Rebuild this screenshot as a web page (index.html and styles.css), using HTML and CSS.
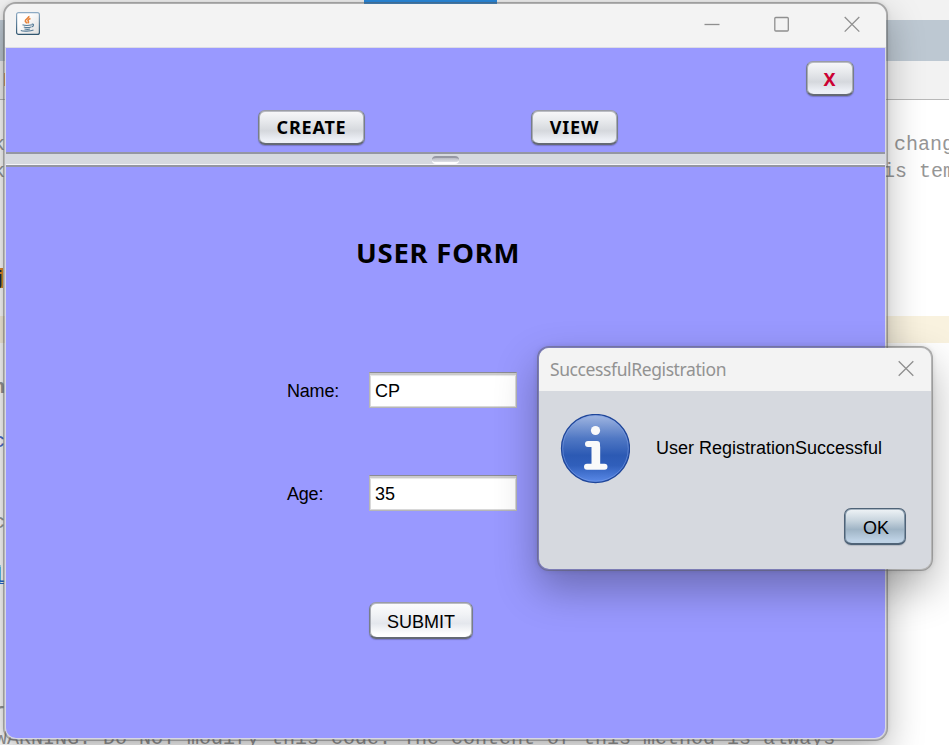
FILE: index.html
```html
<!DOCTYPE html>
<html lang="en">
<head>
<meta charset="utf-8">
<title>User Form</title>
<link rel="stylesheet" href="styles.css">
</head>
<body>
<div class="desktop">
  <div class="editor">
    <div class="tabs"><span class="tab-active"></span></div>
    <div class="band"></div>
    <div class="toolbar"><span class="tool-mark"></span></div>
    <div class="code">
      <div class="line"></div>
      <div class="line"><span class="cut far">k</span><span>change</span></div>
      <div class="line"><span class="cut near">k</span><span>is temp</span></div>
      <div class="line"></div>
      <div class="line"></div>
      <div class="line"></div>
      <div class="line dark"><span class="cut mark">j</span></div>
      <div class="line"></div>
      <div class="line current"></div>
      <div class="line"></div>
      <div class="line bold"><span class="cut">n</span></div>
      <div class="line"></div>
      <div class="line"><span class="cut blue">c</span></div>
      <div class="line"></div>
      <div class="line"></div>
      <div class="line"><span class="cut">c</span></div>
      <div class="line"></div>
      <div class="line"><span class="cut link">l</span></div>
      <div class="line"></div>
      <div class="line"></div>
      <div class="line"></div>
      <div class="line"></div>
      <div class="line bold"><span class="cut">r</span></div>
      <div class="line"><span class="warning">WARNING: Do NOT modify this code. The content of this method is always</span></div>
    </div>
  </div>

  <section class="window main">
    <header class="titlebar">
      <svg class="java" viewBox="0 0 24 24">
        <defs><linearGradient id="jb" x1="0" y1="0" x2="0" y2="1"><stop offset="0" stop-color="#8eabc4"/><stop offset="1" stop-color="#305670"/></linearGradient>
        <linearGradient id="jf" x1="0" y1="0" x2="1" y2="1"><stop offset=".3" stop-color="#fff"/><stop offset="1" stop-color="#ddd"/></linearGradient></defs>
        <rect x=".6" y=".6" width="22.8" height="21.8" rx="2" fill="url(#jf)" stroke="url(#jb)" stroke-width="1.2"/>
        <path d="M12.800 4c1 2-4 3-3.500 5 .2 1 1.500 1.500 1.500 2.500M14.500 6.500c-2 .8-3.200 1.500-2.200 2.700.6.700.3 1.300-.5 2" fill="none" stroke="#e8833a" stroke-width="1.600"/>
        <path d="M6.500 12.700c2 .8 7 .7 9.500 0M7.800 15c2 .6 5.500.6 7.200 0M8.500 17c1.500.4 4.500.4 5.500 0M15.800 12.300c2.500-.8 2.200 2.200-.3 2.700M4.800 18.500c2 1 10 .8 12.700-.5" fill="none" stroke="#557b98" stroke-width="1.100"/>
      </svg>
      <div class="controls">
        <svg viewBox="0 0 16 16"><path d="M.5 8.500h15"/></svg>
        <svg viewBox="0 0 16 16"><rect x=".8" y="1.500" width="13.500" height="13.500" rx="1"/></svg>
        <svg viewBox="0 0 16 16"><path d="M.7 1l14.600 14.600M15.300 1L.7 15.600"/></svg>
      </div>
    </header>
    <div class="menu">
      <div class="close-row"><button class="btn exit">X</button></div>
      <div class="menu-row"><button class="btn create">CREATE</button><button class="btn view">VIEW</button></div>
    </div>
    <div class="divider"><span class="grip"></span></div>
    <div class="form">
      <h1>USER FORM</h1>
      <div class="field name"><label>Name:</label><div class="input">CP</div></div>
      <div class="field age"><label>Age:</label><div class="input">35</div></div>
      <button class="btn submit">SUBMIT</button>
    </div>
  </section>

  <section class="window dialog">
    <header class="dialog-title"><span>SuccessfulRegistration</span>
      <svg viewBox="0 0 16 16"><path d="M.7 1.200l14.600 14.600M15.300 1.200L.7 15.800"/></svg>
    </header>
    <div class="message">
      <svg class="info" viewBox="0 0 70 70">
        <defs><linearGradient id="ig" x1="0" y1="0" x2="0" y2="1"><stop offset="0" stop-color="#a3b8e2"/><stop offset=".35" stop-color="#5078c4"/><stop offset=".6" stop-color="#2c5ab4"/><stop offset=".75" stop-color="#305fbb"/><stop offset="1" stop-color="#5b8ae8"/></linearGradient></defs>
        <circle cx="35.500" cy="34.500" r="34" fill="url(#ig)" stroke="#20479a" stroke-width="1.300"/>
        <circle cx="35.500" cy="34.500" r="32.800" fill="none" stroke="#7fa2ea" stroke-opacity=".5"/>
        <circle cx="35.500" cy="16.500" r="4.600" fill="#fafafa"/>
        <path d="M28 30H37V52M27 52.700H44.500" fill="none" stroke="#fafafa" stroke-width="6" stroke-linecap="round" stroke-linejoin="round"/>
        <path d="M31.500 32.500h8.700v20h-8.700z" fill="#fafafa"/>
      </svg>
      <span>User RegistrationSuccessful</span>
    </div>
    <div class="actions"><button class="btn ok">OK</button></div>
  </section>
</div>
</body>
</html>
```
FILE: styles.css
```css
* { box-sizing: border-box; }
body { margin: 0; font-family: "Liberation Sans", sans-serif; font-size: 18px; color: #000; }
.desktop { position: relative; width: 949px; height: 745px; overflow: hidden; background: #fff; }

.tabs { height: 20px; background: #f2f2f2; }
.tab-active { display: block; width: 133px; height: 4px; margin-left: 364px; background: #2b8be0; }
.band { height: 41px; background: #bdc8d2; }
.toolbar { height: 39px; padding: 12px 0 0 4px; background: #f2f2f2; border-bottom: 1px solid #b8b8b8; }
.tool-mark { display: block; width: 2px; height: 13px; background: #e09a50; }
.line { display: flex; height: 27px; padding-top: 6px; font: 20px/24px "Liberation Mono", monospace; color: #969696; white-space: pre; }
.cut { width: 12px; margin-left: -7px; }
.cut.far { margin-right: 889px; }
.cut.near { margin-right: 878px; }
.current { background: #f9f2df; }
.bold { font-weight: bold; }
.dark { color: #18264a; }
.mark { background: linear-gradient(90deg, transparent 70%, #e08a2c 70%); width: 10px; height: 20px; }
.blue { color: #4867c8; }
.link { color: #2468d0; background: linear-gradient(90deg, #9fdcee 8px, transparent 8px); height: 19px; border-bottom: 1px solid #2468d0; width: 11px; }
.warning { margin-left: -5px; }

.window { position: absolute; display: flex; flex-direction: column; border: 2px solid rgba(90, 90, 90, .45); background-clip: padding-box; }
.main { left: 3px; top: 2px; width: 885px; height: 739px; border-radius: 13px; box-shadow: 0 14px 36px rgba(0, 0, 0, .27), 0 0 4px rgba(0, 0, 0, .1); background-color: #d8d8e4; padding: 0 1px 1px; }
.titlebar { display: flex; justify-content: space-between; flex: none; height: 44px; margin: 0 -1px; padding: 8px 26px 0 11px; background: #f3f3f3; border-bottom: 1px solid #dcdce4; border-radius: 11px 11px 0 0; }
.java { width: 24px; height: 24px; }
.controls { display: flex; gap: 54px; padding-top: 4px; }
.controls svg, .dialog-title svg { width: 16px; height: 16px; fill: none; stroke: #8f8f8f; stroke-width: 1.3; overflow: visible; }
.menu { height: 104px; flex: none; background: #9999ff; }
.close-row { display: flex; justify-content: flex-end; padding: 13px 31px 0 0; }
.menu-row { display: flex; gap: 166px; padding: 14px 0 0 252px; }
.btn { height: 35px; padding: 0; border: 1px solid #777e89; border-top-color: #9a9ca5; border-bottom: 2px solid #656a75; border-radius: 7px; background: linear-gradient(#f8f8fa, #e8eaed 30%, #d5d8dd 62%, #edf0f6 90%, #eef1f7); box-shadow: inset 1px 0 #a9acb3, inset -1px 0 #a9acb3, inset 0 1px #bbbdc4, 0 1px 1px rgba(60, 60, 100, .35); font: bold 18px/20px "Noto Sans", sans-serif; letter-spacing: .8px; color: #000; }
.exit { width: 48px; padding-top: 1px; color: #cc0033; }
.create { width: 107px; }
.view { width: 87px; }
.divider { display: flex; justify-content: center; flex: none; height: 15px; padding-top: 2px; border-top: 2px solid #9496a2; border-bottom: 2px solid #9496a2; background: #d6d9df; box-shadow: inset 0 -1px #f4f4f8; }
.grip { width: 27px; height: 8px; border-top: 2px solid #9698a3; border-bottom: 2px solid #fff; border-radius: 4px; background: linear-gradient(#b9bbc4, #dfe1e6); }
.form { flex: 1; background: #9999ff; border-radius: 0 0 10px 10px; }
h1 { margin: 69px 0 0 350px; font: bold 27.5px/34px "Noto Sans", sans-serif; letter-spacing: .75px; }
.field { display: flex; align-items: center; margin-left: 281px; }
.field label { width: 82px; padding-top: 2px; letter-spacing: -.2px; }
.name { margin-top: 102px; }
.age { margin-top: 67px; }
.input { width: 148px; height: 36px; padding: 0 5px; border: 1px solid #b6b6b6; border-top-color: #8b8b93; line-height: 36px; background: #fff; box-shadow: inset 0 2px #cbcbcb, inset 0 3px 1px #e6e6e6, inset 0 0 0 1px #d8d8d8; }
.submit { display: block; width: 104px; height: 37px; margin: 91px 0 0 363px; padding-top: 4px; font: 18px "Liberation Sans", sans-serif; letter-spacing: 0; background: linear-gradient(#fdfdfe, #f0f2f5 35%, #e4e7ed 60%, #fff 92%); }

.dialog { left: 537px; top: 346px; width: 396px; height: 225px; border-radius: 12px; background-color: #d6d9df; box-shadow: 0 18px 42px rgba(0, 0, 0, .3), 0 0 5px rgba(0, 0, 0, .1); }
.dialog-title { display: flex; justify-content: space-between; height: 43px; padding: 12px 17px 0 11px; background: #f3f3f3; border-radius: 10px 10px 0 0; font: 17.5px/18px "Noto Sans", sans-serif; letter-spacing: -.4px; color: #929292; }
.message { display: flex; align-items: center; gap: 26px; height: 115px; padding-left: 21px; }
.info { width: 70px; height: 70px; }
.actions { display: flex; justify-content: flex-end; padding: 2px 25px 0 0; }
.ok { width: 62px; height: 37px; padding: 4px 0 0 2px; font: 18px "Liberation Sans", sans-serif; letter-spacing: 0; border-color: #4f6377; background: linear-gradient(#f0f4f7, #c6d3dd 35%, #9fb4c5 60%, #bed2e5 92%); box-shadow: inset 1px 0 #7d92a5, inset -1px 0 #7d92a5, inset 0 1px #a7b5c2, 0 1px 1px #b5bac2; }
```
